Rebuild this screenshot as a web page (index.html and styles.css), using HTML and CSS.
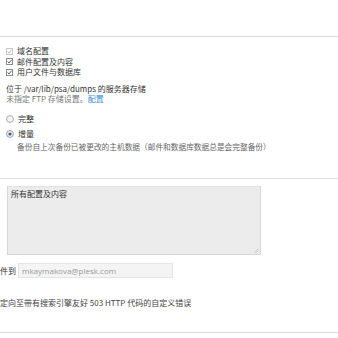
FILE: index.html
```html
<!DOCTYPE html>
<html>
<head>
<meta charset="utf-8">
<link rel="stylesheet" href="styles.css">
</head>
<body>
<div class="page">
  <div class="top"></div>
  <div class="block checks">
    <div class="row"><svg class="cb" viewBox="0 0 7 7"><rect x="0.5" y="0.5" width="6" height="6" fill="#fff" stroke="#c8c8c8"/><path d="M1.6 3.6 L3 5 L5.6 1.8" fill="none" stroke="#b5b5b5" stroke-width="1"/></svg><span class="lbl">域名配置</span></div>
    <div class="row"><svg class="cb" viewBox="0 0 7 7"><rect x="0.5" y="0.5" width="6" height="6" fill="#fff" stroke="#8a8a8a"/><path d="M1.6 3.6 L3 5 L5.6 1.8" fill="none" stroke="#2a5ea8" stroke-width="1"/></svg><span class="lbl">邮件配置及内容</span></div>
    <div class="row"><svg class="cb" viewBox="0 0 7 7"><rect x="0.5" y="0.5" width="6" height="6" fill="#fff" stroke="#8a8a8a"/><path d="M1.6 3.6 L3 5 L5.6 1.8" fill="none" stroke="#2a5ea8" stroke-width="1"/></svg><span class="lbl">用户文件与数据库</span></div>
  </div>
  <div class="block storage">
    <div class="line">位于 /var/lib/psa/dumps 的服务器存储</div>
    <div class="line muted">未指定 FTP 存储设置。<span class="link">配置</span></div>
  </div>
  <div class="block radios">
    <div class="row rrow"><svg class="rb" viewBox="0 0 8 8"><circle cx="4" cy="4" r="3.4" fill="#f4f4f4" stroke="#9a9a9a" stroke-width="0.8"/></svg><span class="lbl">完整</span></div>
    <div class="row rrow"><svg class="rb" viewBox="0 0 8 8"><circle cx="4" cy="4" r="3.4" fill="#f4f4f4" stroke="#8a8a8a" stroke-width="0.8"/><circle cx="4" cy="4" r="1.6" fill="#2a5ea8"/></svg><span class="lbl">增量</span></div>
    <div class="desc">备份自上次备份已被更改的主机数据（邮件和数据库数据总是会完整备份）</div>
  </div>
  <div class="sep"></div>
  <div class="area-wrap">
    <div class="area">所有配置及内容<svg class="grip" viewBox="0 0 5 5"><path d="M4.5 0.5 L0.5 4.5 M4.5 2.5 L2.5 4.5" stroke="#b8b8b8" stroke-width="0.7"/></svg></div>
  </div>
  <div class="email-row">
    <span class="elbl">件到</span>
    <div class="input">mkaymakova@plesk.com</div>
  </div>
  <div class="note">定向至带有搜索引擎友好 503 HTTP 代码的自定义错误</div>
  <div class="bottom"></div>
</div>
</body>
</html>
```
FILE: styles.css
```css
html, body {
  margin: 0;
  padding: 0;
  background: #fff;
}
.page {
  width: 338px;
  height: 338px;
  overflow: hidden;
  font-family: "Noto Sans CJK SC", "Open Sans", sans-serif;
  font-size: 8px;
  color: #333;
  display: flex;
  flex-direction: column;
}
.top {
  height: 36px;
  border-bottom: 1px solid #dcdcdc;
  flex: none;
}
.block {
  padding-left: 6px;
}
.checks {
  margin-top: 9px;
}
.row {
  display: flex;
  align-items: center;
  height: 10.5px;
}
.cb {
  width: 7px;
  height: 7px;
  margin-right: 4px;
  flex: none;
}
.lbl {
  line-height: 10px;
}
.storage {
  margin-top: 6px;
}
.line {
  height: 10.5px;
  line-height: 10.5px;
}
.muted {
  color: #777;
}
.link {
  color: #3a8ed6;
}
.radios {
  margin-top: 7px;
}
.rrow {
  height: 15px;
}
.rb {
  width: 8px;
  height: 8px;
  margin-right: 4px;
  flex: none;
}
.desc {
  padding-left: 11px;
  color: #666;
  line-height: 10px;
  font-size: 7.7px;
}
.sep {
  margin-top: 26px;
  border-top: 1px solid #e2e2e2;
  flex: none;
}
.area-wrap {
  padding-left: 7px;
  margin-top: 7px;
}
.area {
  position: relative;
  width: 246px;
  height: 63px;
  background: #ececec;
  border: 1px solid #d6d6d6;
  border-top-color: #e2e2e2;
  padding: 2px 3px;
  color: #333;
  line-height: 10px;
}
.grip {
  position: absolute;
  right: 1px;
  bottom: 1px;
  width: 5px;
  height: 5px;
}
.email-row {
  display: flex;
  align-items: center;
  margin-top: 8px;
  height: 16px;
}
.elbl {
  width: 18px;
  color: #333;
}
.input {
  width: 150px;
  height: 13px;
  line-height: 13px;
  background: #f4f4f4;
  border: 1px solid #e4e4e4;
  padding-left: 3px;
  color: #999;
  font-family: "Open Sans", "Noto Sans", sans-serif;
  font-size: 8px;
}
.note {
  margin-top: 19px;
  line-height: 10px;
  color: #444;
}
.bottom {
  margin-top: 24px;
  border-top: 1px solid #dcdcdc;
  flex: none;
}
```
